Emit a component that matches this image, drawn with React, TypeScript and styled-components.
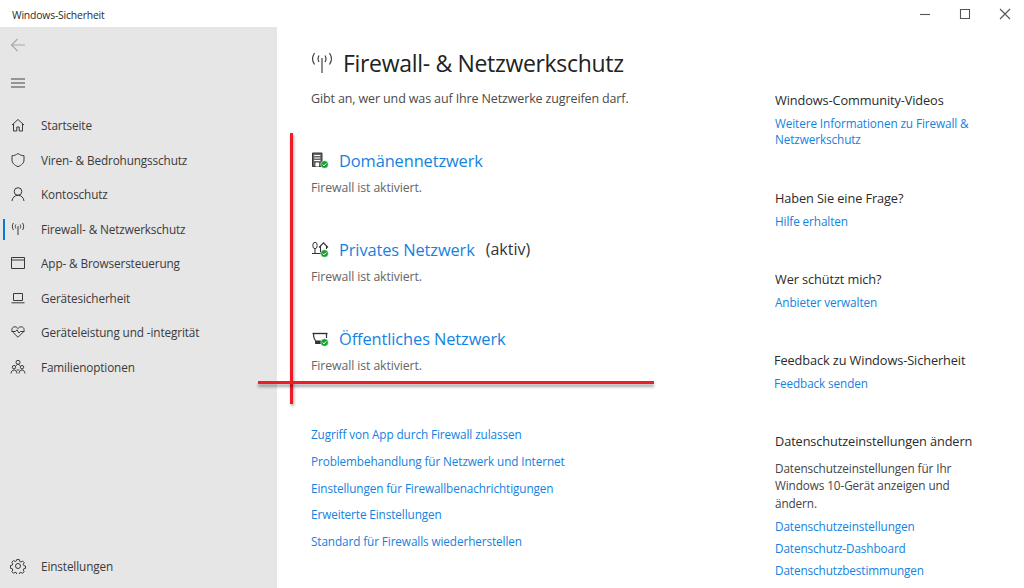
import React from "react";
import styled, { createGlobalStyle } from "styled-components";

const Global = createGlobalStyle`
  html, body { margin: 0; padding: 0; background: #fff; }
  body { font-family: "Open Sans", "Noto Sans", "Liberation Sans", sans-serif; }
  * { box-sizing: border-box; }
`;

const Window = styled.div`
  position: relative;
  width: 1024px;
  height: 588px;
  overflow: hidden;
  display: flex;
  flex-direction: column;
  background: #fff;
`;

const TitleBar = styled.header`
  height: 27px;
  flex: none;
  display: flex;
  align-items: center;
  justify-content: space-between;
  padding: 2px 0 0 12px;
`;

const TitleText = styled.span`
  font-size: 10.4px;
  letter-spacing: -0.18px;
  color: #2c2c2c;
`;

const WindowButtons = styled.div`
  display: flex;
  gap: 16px;
  padding-right: 7px;
  margin-top: -1px;
`;

const WindowButton = styled.svg`
  width: 24px;
  height: 14px;
  stroke: #555;
  fill: none;
  stroke-width: 1.1;
`;

const Body = styled.div`
  flex: 1;
  display: flex;
  min-height: 0;
`;

const Sidebar = styled.nav`
  width: 277px;
  flex: none;
  background: #e6e6e6;
  display: flex;
  flex-direction: column;
`;

const TopIcon = styled.svg<{ $h: number; $c: string }>`
  display: block;
  width: 16px;
  height: ${(p) => p.$h}px;
  margin-left: 10px;
  fill: none;
  stroke: ${(p) => p.$c};
  stroke-width: 1.1;
`;

const BackRow = styled.div`
  height: 36px;
  display: flex;
  align-items: center;
`;

const MenuRow = styled.div`
  height: 40px;
  display: flex;
  align-items: center;
`;

const NavList = styled.div`
  margin-top: 5px;
  display: flex;
  flex-direction: column;
`;

const NavItem = styled.div<{ $active?: boolean }>`
  position: relative;
  height: 34.5px;
  display: flex;
  align-items: center;
  padding-left: 10px;
  gap: 15px;
  font-size: 11.75px;
  letter-spacing: -0.12px;
  color: #3a3a3a;
  ${(p) =>
    p.$active &&
    `&::before {
      content: "";
      position: absolute;
      left: 3px;
      top: 7px;
      width: 2px;
      height: 21px;
      background: #0a78d7;
    }`}
`;

const NavIcon = styled.svg`
  width: 16px;
  height: 16px;
  flex: none;
  fill: none;
  stroke: #3a3a3a;
  stroke-width: 1;
`;

const SidebarFoot = styled.div`
  margin-top: auto;
  padding-bottom: 5px;
`;

const Main = styled.main`
  flex: 1;
  display: flex;
  min-width: 0;
`;

const Content = styled.section`
  width: 498px;
  flex: none;
  padding: 19px 0 0 34px;
`;

const Heading = styled.div`
  display: flex;
  align-items: center;
  gap: 10px;
  height: 34px;
`;

const HeadingIcon = styled.svg`
  width: 22px;
  height: 22px;
  flex: none;
  fill: none;
  stroke: #333;
  stroke-width: 1.1;
`;

const HeadingText = styled.h1`
  margin: 0;
  font-size: 23px;
  font-weight: 400;
  letter-spacing: -0.32px;
  color: #222;
  white-space: nowrap;
`;

const Subtitle = styled.p`
  margin: 10px 0 0;
  font-size: 12.5px;
  line-height: 18px;
  letter-spacing: -0.13px;
  color: #4a4a4a;
  white-space: nowrap;
`;

const Networks = styled.div`
  margin-top: 40px;
  display: flex;
  flex-direction: column;
  gap: 39px;
`;

const Network = styled.div`
  height: 50px;
  display: flex;
  flex-direction: column;
`;

const NetworkHead = styled.div`
  height: 24px;
  display: flex;
  align-items: center;
  gap: 8px;
`;

const NetworkIcon = styled.svg`
  width: 20px;
  height: 18px;
  flex: none;
  fill: none;
  stroke: #333;
  stroke-width: 1;
`;

const NetworkName = styled.span`
  font-size: 16.4px;
  letter-spacing: -0.1px;
  color: #1482e0;
`;

const ActiveTag = styled.span`
  font-size: 16px;
  color: #333;
  margin-left: 3px;
`;

const Status = styled.div`
  margin-top: 7px;
  font-size: 12.3px;
  line-height: 18px;
  letter-spacing: -0.1px;
  color: #666;
`;

const Links = styled.div`
  margin-top: 49px;
  display: flex;
  flex-direction: column;
  gap: 8.8px;
`;

const TextLink = styled.a`
  display: block;
  font-size: 11.75px;
  line-height: 18px;
  letter-spacing: -0.1px;
  color: #1482e0;
`;

const Aside = styled.aside`
  flex: 1;
  padding-top: 64px;
  display: flex;
  flex-direction: column;
`;

const AsideBlock = styled.div<{ $gap: number; $shift?: number }>`
  margin-top: ${(p) => p.$gap}px;
  margin-left: ${(p) => p.$shift ?? 0}px;
  display: flex;
  flex-direction: column;
`;

const AsideTitle = styled.h2`
  margin: 0 0 7px;
  font-size: 12.75px;
  line-height: 18px;
  font-weight: 400;
  letter-spacing: -0.1px;
  color: #2a2a2a;
  white-space: nowrap;
`;

const AsideText = styled.p`
  margin: 3px 0 5px;
  font-size: 11.75px;
  line-height: 17.6px;
  letter-spacing: -0.1px;
  color: #444;
  width: 205px;
`;

const AsideLink = styled.a`
  display: block;
  font-size: 11.75px;
  line-height: 15.5px;
  letter-spacing: -0.1px;
  color: #1482e0;
  width: 215px;
`;

const PrivacyLink = styled(AsideLink)`
  line-height: 18px;
  margin-bottom: 4px;
`;

const MarkerV = styled.div`
  position: absolute;
  left: 290px;
  top: 133px;
  width: 3px;
  height: 271px;
  background: #ee1c25;
  box-shadow: 1px 2px 3px rgba(0, 0, 0, 0.35);
`;

const MarkerH = styled.div`
  position: absolute;
  left: 258px;
  top: 381px;
  width: 396px;
  height: 3px;
  background: #ee1c25;
  box-shadow: 0 3px 3px rgba(0, 0, 0, 0.35);
`;

const Check = ({ x, y }: { x: number; y: number }) => (
  <g>
    <circle cx={x} cy={y} r="3.800" fill="#16a02f" stroke="#fff" strokeWidth="0.5" />
    <path d={`M${x - 1.9} ${y}l1.4 1.4 2.4-2.6`} stroke="#fff" strokeWidth="1" fill="none" />
  </g>
);

const navItems: { label: string; icon: React.ReactNode; active?: boolean }[] = [
  {
    label: "Startseite",
    icon: <path d="M2 8 8 2.500 14 8M3.500 7V14H6.800V10H9.200V14H12.500V7" />,
  },
  {
    label: "Viren- & Bedrohungsschutz",
    icon: <path d="M8 1.500c1.800 1.400 3.700 2.100 6 2.200v4.300c0 3-2.400 5.200-6 6.700-3.600-1.500-6-3.700-6-6.700V3.700c2.300-.1 4.200-.8 6-2.200Z" />,
  },
  {
    label: "Kontoschutz",
    icon: (
      <>
        <circle cx="8" cy="5.500" r="3.800" />
        <path d="M2 15c.4-3.600 2.800-5.700 6-5.700s5.600 2.100 6 5.700" />
      </>
    ),
  },
  {
    label: "Firewall- & Netzwerkschutz",
    active: true,
    icon: (
      <>
        <path d="M8 5V14" />
        <path d="M5.900 3.500c-.8 1.300-.8 2.700 0 4M10.100 3.500c.8 1.300.8 2.700 0 4M3.400 2c-1.400 2.300-1.400 4.700 0 7M12.600 2c1.400 2.300 1.400 4.700 0 7" />
      </>
    ),
  },
  {
    label: "App- & Browsersteuerung",
    icon: <path d="M1.500 2.500H14.500V13.500H1.500ZM1.500 5H14.500" />,
  },
  {
    label: "Gerätesicherheit",
    icon: <path d="M3.500 3.500H12.500V10.500H3.500ZM1.500 12.800H14.500" />,
  },
  {
    label: "Geräteleistung und -integrität",
    icon: (
      <path d="M8 13.300 2.700 8C.9 5.700 2.200 2.800 4.900 2.800 6.300 2.800 7.300 3.500 8 4.500c.7-1 1.700-1.700 3.100-1.700 2.700 0 4 2.900 2.200 5.200L8 13.300ZM1.500 7.500H5.500L7 5.800 9 9 10.500 7.500H14.500" />
    ),
  },
  {
    label: "Familienoptionen",
    icon: (
      <>
        <circle cx="8" cy="3.300" r="2" />
        <circle cx="4" cy="8.200" r="1.700" />
        <circle cx="12" cy="8.200" r="1.700" />
        <path d="M1 14.500c.2-2 1.300-3.500 3-3.500s2.800 1.500 3 3.500M9 14.500c.2-2 1.300-3.500 3-3.500s2.800 1.500 3 3.500M5.800 7c.5-1 1.200-1.500 2.200-1.500s1.700.5 2.200 1.500M6.500 11h3" />
      </>
    ),
  },
];

const networks = [
  {
    name: "Domänennetzwerk",
    icon: (
      <>
        <path d="M1.500 2H11V15.500H1.500Z" fill="#666" />
        <path d="M3.200 4.500H9.300M3.200 7H9.300M3.200 9.500H9.300" stroke="#fff" />
        <path d="M5 15.500V12H7.500V15.500" fill="#fff" stroke="#fff" />
        <Check x={13.5} y={13.5} />
      </>
    ),
  },
  {
    name: "Privates Netzwerk",
    tag: "(aktiv)",
    icon: (
      <>
        <ellipse cx="4" cy="5.500" rx="2.200" ry="3.200" />
        <path d="M4 8.700V13.500M1 13.500H11M8 7.500 12.500 2.800 17 7.500M9.500 6.500V12.500M15.500 6.500V9" strokeWidth="1.100" />
        <Check x={13.5} y={13.5} />
      </>
    ),
  },
  {
    name: "Öffentliches Netzwerk",
    icon: (
      <>
        <path d="M1.500 4.500H16.500" strokeWidth="1.400" />
        <path d="M2.500 4.500c0 3 .7 6 2.500 7.500H10M15.500 4.500V9" strokeWidth="1.200" />
        <path d="M4.500 12.500H11V14.500H4.500Z" fill="#333" />
        <Check x={13.5} y={13.5} />
      </>
    ),
  },
];

const firewallLinks = [
  "Zugriff von App durch Firewall zulassen",
  "Problembehandlung für Netzwerk und Internet",
  "Einstellungen für Firewallbenachrichtigungen",
  "Erweiterte Einstellungen",
  "Standard für Firewalls wiederherstellen",
];

export default function App() {
  return (
    <Window>
      <Global />
      <TitleBar>
        <TitleText>Windows-Sicherheit</TitleText>
        <WindowButtons>
          <WindowButton viewBox="0 0 24 14">
            <path d="M7 7.500H17" />
          </WindowButton>
          <WindowButton viewBox="0 0 24 14">
            <path d="M7.500 2.500H16.500V11.500H7.500Z" />
          </WindowButton>
          <WindowButton viewBox="0 0 24 14">
            <path d="M7 2 17 12M17 2 7 12" />
          </WindowButton>
        </WindowButtons>
      </TitleBar>
      <Body>
        <Sidebar>
          <BackRow>
            <TopIcon $h={14} $c="#a8a8a8" viewBox="0 0 16 14">
              <path d="M15 7H1.500M7.500 1 1.500 7l6 6" />
            </TopIcon>
          </BackRow>
          <MenuRow>
            <TopIcon $h={12} $c="#444" viewBox="0 0 16 12">
              <path d="M1 2H15M1 6H15M1 10H15" />
            </TopIcon>
          </MenuRow>
          <NavList>
            {navItems.map((item) => (
              <NavItem key={item.label} $active={item.active}>
                <NavIcon viewBox="0 0 16 16">{item.icon}</NavIcon>
                {item.label}
              </NavItem>
            ))}
          </NavList>
          <SidebarFoot>
            <NavItem>
              <NavIcon viewBox="0 0 16 16">
                <circle cx="8" cy="8" r="2.500" />
                <path d="M6.800 1.500h2.400l.4 1.900 1.300.6 1.700-1 1.600 1.700-1 1.600.6 1.300 1.700.4v2.400l-1.800.4-.5 1.300 1 1.600-1.700 1.600-1.600-1-1.300.6-.4 1.600H6.800l-.4-1.700-1.300-.5-1.600 1-1.700-1.700 1-1.600-.6-1.300-1.700-.4V7.500l1.800-.4.5-1.300-1-1.600 1.700-1.700 1.600 1 1.300-.6Z" />
              </NavIcon>
              Einstellungen
            </NavItem>
          </SidebarFoot>
        </Sidebar>
        <Main>
          <Content>
            <Heading>
              <HeadingIcon viewBox="0 0 22 22">
                <path d="M11 6V21" />
                <path d="M8 3.500c-1.200 2-1.200 4.500 0 6.500M14 3.500c1.200 2 1.200 4.500 0 6.500M3.500 1C1 4.800 1 9 3.500 12.500M18.500 1C21 4.800 21 9 18.500 12.500" />
              </HeadingIcon>
              <HeadingText>Firewall- &amp; Netzwerkschutz</HeadingText>
            </Heading>
            <Subtitle>Gibt an, wer und was auf Ihre Netzwerke zugreifen darf.</Subtitle>
            <Networks>
              {networks.map((n) => (
                <Network key={n.name}>
                  <NetworkHead>
                    <NetworkIcon viewBox="0 0 20 18">{n.icon}</NetworkIcon>
                    <NetworkName>{n.name}</NetworkName>
                    {n.tag && <ActiveTag>{n.tag}</ActiveTag>}
                  </NetworkHead>
                  <Status>Firewall ist aktiviert.</Status>
                </Network>
              ))}
            </Networks>
            <Links>
              {firewallLinks.map((l) => (
                <TextLink key={l}>{l}</TextLink>
              ))}
            </Links>
          </Content>
          <Aside>
            <AsideBlock $gap={0}>
              <AsideTitle>Windows-Community-Videos</AsideTitle>
              <AsideLink>Weitere Informationen zu Firewall &amp; Netzwerkschutz</AsideLink>
            </AsideBlock>
            <AsideBlock $gap={42}>
              <AsideTitle>Haben Sie eine Frage?</AsideTitle>
              <AsideLink>Hilfe erhalten</AsideLink>
            </AsideBlock>
            <AsideBlock $gap={40}>
              <AsideTitle>Wer schützt mich?</AsideTitle>
              <AsideLink>Anbieter verwalten</AsideLink>
            </AsideBlock>
            <AsideBlock $gap={41} $shift={-1}>
              <AsideTitle>Feedback zu Windows-Sicherheit</AsideTitle>
              <AsideLink>Feedback senden</AsideLink>
            </AsideBlock>
            <AsideBlock $gap={40}>
              <AsideTitle>Datenschutzeinstellungen ändern</AsideTitle>
              <AsideText>Datenschutzeinstellungen für Ihr Windows 10-Gerät anzeigen und ändern.</AsideText>
              <PrivacyLink>Datenschutzeinstellungen</PrivacyLink>
              <PrivacyLink>Datenschutz-Dashboard</PrivacyLink>
              <PrivacyLink>Datenschutzbestimmungen</PrivacyLink>
            </AsideBlock>
          </Aside>
        </Main>
      </Body>
      <MarkerV />
      <MarkerH />
    </Window>
  );
}
